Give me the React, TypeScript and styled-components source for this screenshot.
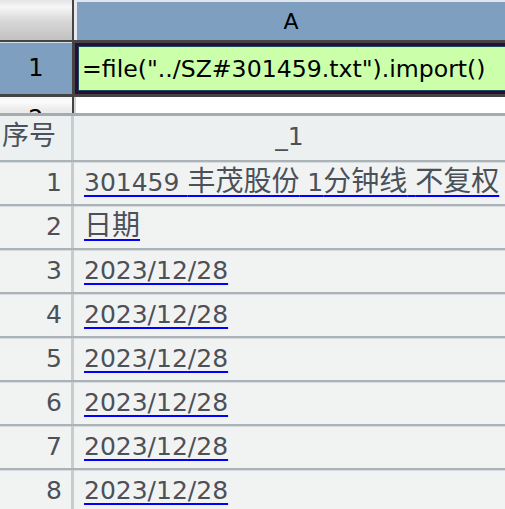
import React from 'react';
import styled, { createGlobalStyle } from 'styled-components';

const Global = createGlobalStyle`
  html, body { margin: 0; padding: 0; background: #ffffff; overflow: hidden; }
  body { font-family: "DejaVu Sans", "Noto Sans CJK SC", sans-serif; }
`;

const Page = styled.div`
  width: 505px;
  height: 509px;
  overflow: hidden;
  display: flex;
  flex-direction: column;
`;

/* ---------- top spreadsheet ---------- */

const Sheet = styled.div`
  height: 113px;
  flex-shrink: 0;
  overflow: hidden;
  display: grid;
  grid-template-columns: 74px 1fr;
  grid-template-rows: 40px 57px 57px;
`;

const Corner = styled.div`
  border-right: 2px solid #444444;
  background: linear-gradient(#e4e4e4 0%, #f6f6f6 18%, #d6d6d6 55%, #c2c2c2 100%);
`;

const ColHeader = styled.div`
  border-left: 3px solid #e6eaee;
  border-top: 2px solid #e2e6ea;
  background: #7e9fbf;
  color: #000000;
  font-size: 22px;
  display: flex;
  align-items: center;
  justify-content: center;
`;

const RowHeader = styled.div<{ $selected?: boolean }>`
  border-right: 2px solid #444444;
  border-top: ${p => (p.$selected ? '2px solid #444444' : 'none')};
  border-bottom: ${p => (p.$selected ? '3px solid #444444' : 'none')};
  background: ${p =>
    p.$selected
      ? '#7e9fbf'
      : 'linear-gradient(#f4f4f4 0%, #fbfbfb 8%, #ececec 22%, #d8d8d8 100%)'};
  box-shadow: ${p => (p.$selected ? 'inset 0 1px 0 #d6e0ea' : 'none')};
  color: #000000;
  font-size: 24px;
  line-height: 28px;
  display: flex;
  align-items: ${p => (p.$selected ? 'center' : 'flex-start')};
  padding-top: ${p => (p.$selected ? '0' : '8px')};
  justify-content: center;
`;

const SelectedCell = styled.div`
  width: calc(100% + 20px);
  border: 3px solid #444444;
  border-left-width: 1px;
  box-shadow: inset 0 0 0 3px #2c0d34, inset 0 0 0 4px #1c4a60;
  background: #ccffaa;
  color: #000000;
  font-size: 23.6px;
  display: flex;
  align-items: center;
  padding-left: 7px;
  white-space: nowrap;
`;

const PlainCell = styled.div`
  border-left: 2px solid #cfd5d8;
  background: #ffffff;
`;

/* ---------- result panel ---------- */

const Panel = styled.div`
  flex: 1;
  border-top: 3px solid #a4acb0;
  background: #eff1f2;
  color: #4b5159;
  overflow: hidden;
`;

const TRow = styled.div<{ $head?: boolean }>`
  display: grid;
  grid-template-columns: 74px 1fr;
  height: ${p => (p.$head ? '44px' : '42px')};
  border-top: ${p => (p.$head ? 'none' : '2px solid #abb3b7')};
  box-shadow: ${p => (p.$head ? 'none' : 'inset 0 1px 0 #d6dcdf')};
  background: ${p => (p.$head ? '#edf0f1' : '#f1f3f3')};
  line-height: 42px;
  font-size: 25px;
`;

const NumCell = styled.div<{ $head?: boolean }>`
  border-right: 3px solid #c6cdd0;
  text-align: ${p => (p.$head ? 'left' : 'right')};
  padding: ${p => (p.$head ? '0 0 0 2px' : '0 9px 0 0')};
  white-space: nowrap;
`;

const DataCell = styled.div<{ $head?: boolean }>`
  padding-left: ${p => (p.$head ? '0' : '10px')};
  text-align: ${p => (p.$head ? 'center' : 'left')};
  white-space: nowrap;
`;

const Link = styled.span`
  text-decoration: underline;
  text-decoration-color: #0000ff;
  text-decoration-thickness: 2px;
  text-underline-offset: 4px;
`;

const Cjk = styled.span<{ $size?: number }>`
  font-family: "Noto Sans CJK SC", sans-serif;
  font-size: ${p => p.$size ?? 28}px;
  line-height: 1;
`;

const CJK_RE = /([\u3000-\u9fff\uff00-\uffef]+)/;

function Mixed({ text, size }: { text: string; size?: number }) {
  const parts = text.split(CJK_RE);
  return (
    <>
      {parts.map((p, i) =>
        p === '' ? null : CJK_RE.test(p) ? (
          <Cjk key={i} $size={size}>
            {p}
          </Cjk>
        ) : (
          <React.Fragment key={i}>{p}</React.Fragment>
        )
      )}
    </>
  );
}

const rows = [
  '301459 丰茂股份 1分钟线 不复权',
  '日期',
  '2023/12/28',
  '2023/12/28',
  '2023/12/28',
  '2023/12/28',
  '2023/12/28',
  '2023/12/28',
];

export default function App() {
  return (
    <Page>
      <Global />
      <Sheet>
        <Corner />
        <ColHeader>A</ColHeader>
        <RowHeader $selected>1</RowHeader>
        <SelectedCell>=file("../SZ#301459.txt").import()</SelectedCell>
        <RowHeader>2</RowHeader>
        <PlainCell />
      </Sheet>
      <Panel>
        <TRow $head>
          <NumCell $head>
            <Mixed text="序号" size={27} />
          </NumCell>
          <DataCell $head>_1</DataCell>
        </TRow>
        {rows.map((r, i) => (
          <TRow key={i}>
            <NumCell>{i + 1}</NumCell>
            <DataCell>
              <Link>
                <Mixed text={r} />
              </Link>
            </DataCell>
          </TRow>
        ))}
      </Panel>
    </Page>
  );
}
